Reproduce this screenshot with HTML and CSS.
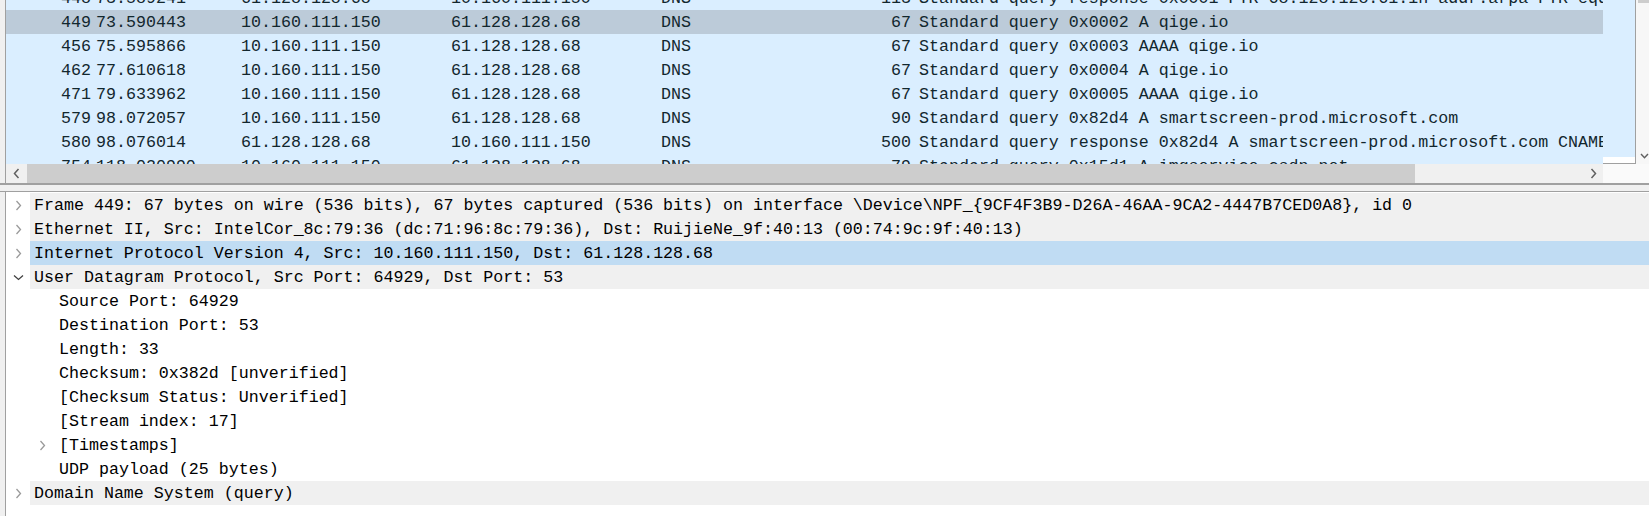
FILE: index.html
```html
<!DOCTYPE html>
<html>
<head>
<meta charset="utf-8">
<title>Wireshark</title>
<link rel="stylesheet" href="styles.css">
</head>
<body>
<div class="app">
  <div class="plist-pane">
    <div class="plist-main">
      <div class="plist-viewport">
        <div class="plist-rows">
          <div class="prow"><span class="c-no">448</span><span class="c-time">73.589241</span><span class="c-src">61.128.128.68</span><span class="c-dst">10.160.111.150</span><span class="c-proto">DNS</span><span class="c-len">113</span><span class="c-info">Standard query response 0x0001 PTR 68.128.128.61.in-addr.arpa PTR eqdns.example.net</span></div>
          <div class="prow selected"><span class="c-no">449</span><span class="c-time">73.590443</span><span class="c-src">10.160.111.150</span><span class="c-dst">61.128.128.68</span><span class="c-proto">DNS</span><span class="c-len">67</span><span class="c-info">Standard query 0x0002 A qige.io</span></div>
          <div class="prow"><span class="c-no">456</span><span class="c-time">75.595866</span><span class="c-src">10.160.111.150</span><span class="c-dst">61.128.128.68</span><span class="c-proto">DNS</span><span class="c-len">67</span><span class="c-info">Standard query 0x0003 AAAA qige.io</span></div>
          <div class="prow"><span class="c-no">462</span><span class="c-time">77.610618</span><span class="c-src">10.160.111.150</span><span class="c-dst">61.128.128.68</span><span class="c-proto">DNS</span><span class="c-len">67</span><span class="c-info">Standard query 0x0004 A qige.io</span></div>
          <div class="prow"><span class="c-no">471</span><span class="c-time">79.633962</span><span class="c-src">10.160.111.150</span><span class="c-dst">61.128.128.68</span><span class="c-proto">DNS</span><span class="c-len">67</span><span class="c-info">Standard query 0x0005 AAAA qige.io</span></div>
          <div class="prow"><span class="c-no">579</span><span class="c-time">98.072057</span><span class="c-src">10.160.111.150</span><span class="c-dst">61.128.128.68</span><span class="c-proto">DNS</span><span class="c-len">90</span><span class="c-info">Standard query 0x82d4 A smartscreen-prod.microsoft.com</span></div>
          <div class="prow"><span class="c-no">580</span><span class="c-time">98.076014</span><span class="c-src">61.128.128.68</span><span class="c-dst">10.160.111.150</span><span class="c-proto">DNS</span><span class="c-len">500</span><span class="c-info">Standard query response 0x82d4 A smartscreen-prod.microsoft.com CNAME smartscreen-prod.microsoft.com.akadns.net</span></div>
          <div class="prow"><span class="c-no">754</span><span class="c-time">118.020990</span><span class="c-src">10.160.111.150</span><span class="c-dst">61.128.128.68</span><span class="c-proto">DNS</span><span class="c-len">79</span><span class="c-info">Standard query 0x15d1 A imgservice.csdn.net</span></div>
        </div>
      </div>
      <div class="hscroll">
        <div class="sb-btn sb-left"><svg width="7" height="11" viewBox="0 0 7 11"><polyline points="5.5,1 1.5,5.5 5.5,10" fill="none" stroke="#606060" stroke-width="1.5"/></svg></div>
        <div class="sb-thumb"></div>
        <div class="sb-track"></div>
        <div class="sb-btn sb-right"><svg width="7" height="11" viewBox="0 0 7 11"><polyline points="1.5,1 5.5,5.5 1.5,10" fill="none" stroke="#606060" stroke-width="1.5"/></svg></div>
      </div>
    </div>
    <div class="side-col">
      <div class="minimap"><div class="mm-fill"></div><div class="mm-rest"></div></div>
    </div>
    <div class="vscroll">
      <div class="vs-thumb"></div>
      <div class="vs-track"></div>
      <div class="vs-btn"><svg width="9" height="6" viewBox="0 0 9 6"><polyline points="1,1 4.5,4.8 8,1" fill="none" stroke="#606060" stroke-width="1.4"/></svg></div>
      <div class="vs-foot"></div>
    </div>
  </div>
  <div class="splitter"></div>
  <div class="details">
    <div class="trow">
      <span class="twisty"><svg width="7" height="11" viewBox="0 0 7 11"><polyline points="1.5,1 5.5,5.5 1.5,10" fill="none" stroke="#9a9a9a" stroke-width="1.3"/></svg></span>
      <span class="label shaded">Frame 449: 67 bytes on wire (536 bits), 67 bytes captured (536 bits) on interface \Device\NPF_{9CF4F3B9-D26A-46AA-9CA2-4447B7CED0A8}, id 0</span>
    </div>
    <div class="trow">
      <span class="twisty"><svg width="7" height="11" viewBox="0 0 7 11"><polyline points="1.5,1 5.5,5.5 1.5,10" fill="none" stroke="#9a9a9a" stroke-width="1.3"/></svg></span>
      <span class="label shaded">Ethernet II, Src: IntelCor_8c:79:36 (dc:71:96:8c:79:36), Dst: RuijieNe_9f:40:13 (00:74:9c:9f:40:13)</span>
    </div>
    <div class="trow">
      <span class="twisty"><svg width="7" height="11" viewBox="0 0 7 11"><polyline points="1.5,1 5.5,5.5 1.5,10" fill="none" stroke="#9a9a9a" stroke-width="1.3"/></svg></span>
      <span class="label current">Internet Protocol Version 4, Src: 10.160.111.150, Dst: 61.128.128.68</span>
    </div>
    <div class="trow">
      <span class="twisty"><svg width="11" height="7" viewBox="0 0 11 7"><polyline points="1,1.5 5.5,5.5 10,1.5" fill="none" stroke="#404040" stroke-width="1.3"/></svg></span>
      <span class="label shaded">User Datagram Protocol, Src Port: 64929, Dst Port: 53</span>
    </div>
    <div class="trow child"><span class="indent"></span><span class="twisty"></span><span class="label">Source Port: 64929</span></div>
    <div class="trow child"><span class="indent"></span><span class="twisty"></span><span class="label">Destination Port: 53</span></div>
    <div class="trow child"><span class="indent"></span><span class="twisty"></span><span class="label">Length: 33</span></div>
    <div class="trow child"><span class="indent"></span><span class="twisty"></span><span class="label">Checksum: 0x382d [unverified]</span></div>
    <div class="trow child"><span class="indent"></span><span class="twisty"></span><span class="label">[Checksum Status: Unverified]</span></div>
    <div class="trow child"><span class="indent"></span><span class="twisty"></span><span class="label">[Stream index: 17]</span></div>
    <div class="trow child"><span class="indent"></span><span class="twisty"><svg width="7" height="11" viewBox="0 0 7 11"><polyline points="1.5,1 5.5,5.5 1.5,10" fill="none" stroke="#9a9a9a" stroke-width="1.3"/></svg></span><span class="label">[Timestamps]</span></div>
    <div class="trow child"><span class="indent"></span><span class="twisty"></span><span class="label">UDP payload (25 bytes)</span></div>
    <div class="trow">
      <span class="twisty"><svg width="7" height="11" viewBox="0 0 7 11"><polyline points="1.5,1 5.5,5.5 1.5,10" fill="none" stroke="#9a9a9a" stroke-width="1.3"/></svg></span>
      <span class="label shaded">Domain Name System (query)</span>
    </div>
  </div>
</div>
</body>
</html>
```

FILE: styles.css
```css
html, body {
  margin: 0;
  padding: 0;
}
body {
  width: 1649px;
  height: 516px;
  overflow: hidden;
  background: #f0f0f0;
  font-family: "Liberation Mono", "DejaVu Sans Mono", monospace;
  font-size: 16.65px;
}
.app {
  display: flex;
  flex-direction: column;
  width: 1649px;
  height: 516px;
}

/* ---------- packet list ---------- */
.plist-pane {
  display: flex;
  height: 183px;
  margin-left: 5px;
  flex: none;
}
.plist-main {
  width: 1598px;
  flex: none;
  border-left: 1px solid #a0a0a0;
  box-sizing: border-box;
  display: flex;
  flex-direction: column;
}
.plist-viewport {
  height: 164px;
  overflow: hidden;
  background: #daeeff;
}
.plist-rows {
  margin-top: -14px;
}
.prow {
  display: grid;
  grid-template-columns: 90px 145px 210px 210px 160px 95px 1fr;
  height: 24px;
  box-sizing: border-box;
  padding-top: 2px;
  line-height: 22px;
  color: #12272e;
  background: #daeeff;
  white-space: nowrap;
}
.prow.selected {
  background: #bccbd9;
}
.prow span {
  overflow: hidden;
}
.c-no, .c-len {
  text-align: right;
  padding-right: 5px;
}
.c-info {
  padding-left: 3px;
}

.hscroll {
  height: 19px;
  display: flex;
  background: #f0f0f0;
}
.sb-btn {
  display: flex;
  align-items: center;
  justify-content: center;
  flex: none;
}
.sb-left {
  width: 21px;
}
.sb-right {
  width: 20px;
}
.sb-thumb {
  width: 1388px;
  background: #cdcdcd;
  flex: none;
}
.sb-track {
  flex: 1;
}

.side-col {
  width: 33px;
  flex: none;
  background: #fafafa;
}
.minimap {
  height: 164px;
  box-sizing: border-box;
  border-right: 1px solid #a0a0a0;
  border-bottom: 1px solid #a0a0a0;
  display: flex;
  flex-direction: column;
}
.mm-fill {
  flex: 1;
  background: #daeeff;
}
.mm-rest {
  height: 6px;
  background: #ffffff;
}

.vscroll {
  width: 17px;
  flex: none;
  display: flex;
  flex-direction: column;
  background: #f7f7f7;
}
.vs-thumb {
  height: 3px;
  background: #cdcdcd;
  margin-left: 2px;
}
.vs-track {
  flex: 1;
}
.vs-btn {
  height: 17px;
  display: flex;
  align-items: center;
  justify-content: center;
}
.vs-foot {
  height: 19px;
  background: #fafafa;
}

/* ---------- splitter ---------- */
.splitter {
  height: 6px;
  flex: none;
  border-top: 2px solid #a0a0a0;
  border-bottom: 1px solid #a0a0a0;
  background: #f0f0f0;
}

/* ---------- details tree ---------- */
.details {
  flex: 1;
  margin-left: 5px;
  border-left: 1px solid #a0a0a0;
  background: #ffffff;
  padding-top: 1px;
  color: #000000;
}
.trow {
  display: flex;
  height: 24px;
  white-space: nowrap;
}
.twisty {
  width: 24px;
  flex: none;
  display: flex;
  align-items: center;
  justify-content: center;
}
.indent {
  width: 0px;
  flex: none;
}
.child .twisty {
  width: 25px;
}
.child .indent {
  width: 24px;
}
.label {
  flex: 1;
  box-sizing: border-box;
  padding-left: 4px;
  padding-top: 2px;
  line-height: 22px;
  overflow: hidden;
}
.label.shaded {
  background: #f0f0f0;
}
.label.current {
  background: #c0dcf3;
}
```
